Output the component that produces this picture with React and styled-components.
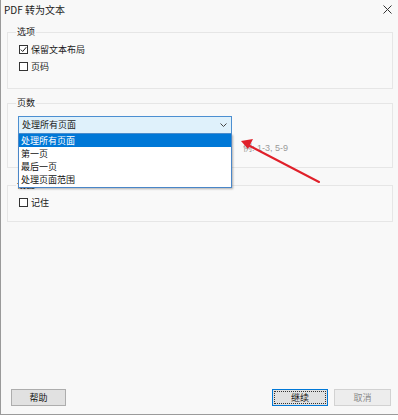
import React from 'react';
import styled, { createGlobalStyle } from 'styled-components';

const GlobalStyle = createGlobalStyle`
  html, body {
    margin: 0;
    padding: 0;
    background: #ffffff;
  }
  body {
    font-family: "Noto Sans CJK SC", "Noto Sans", sans-serif;
    font-size: 9px;
    color: #1a1a1a;
  }
`;

// Dialog window
const Window = styled.div`
  position: relative;
  width: 397px;
  height: 414px;
  background: #f8f8f8;
  border-left: 1px solid #9a9a9a;
  border-bottom: 1px solid #9a9a9a;
  display: flex;
  flex-direction: column;
`;

const TitleBar = styled.div`
  height: 20px;
  display: flex;
  align-items: center;
  justify-content: space-between;
  padding: 0 6px 0 3px;
  font-size: 10px;
  line-height: 12px;
  color: #222;
`;

const CloseButton = styled.div`
  width: 9px;
  height: 9px;
  margin-top: -2px;
  display: flex;
`;

const Content = styled.div`
  flex: 1;
  display: flex;
  flex-direction: column;
  padding: 0 5px 0 6px;
`;

// Group box (like a fieldset)
const GroupBox = styled.div`
  position: relative;
  margin-top: ${p => p.$top}px;
  border: 1px solid #e6e6e6;
  padding: ${p => p.$pt}px 10px ${p => p.$pb}px 11px;
  background: #f9f9f9;
`;

const Caption = styled.div`
  position: absolute;
  top: -7px;
  left: 8px;
  padding: 0 1px;
  font-size: 9px;
  line-height: 12px;
  background: #f8f8f8;
`;

const CheckRow = styled.label`
  height: 17px;
  display: flex;
  align-items: center;
  gap: 3px;
  line-height: 12px;
`;

const Box = styled.span`
  width: 9px;
  height: 9px;
  box-sizing: border-box;
  border: 1px solid #333;
  background: #fff;
  display: flex;
  align-items: center;
  justify-content: center;
`;

const SelectWrap = styled.div`
  position: relative;
  margin-left: -1px;
  width: 214px;
`;

const Select = styled.div`
  width: 214px;
  height: 18px;
  box-sizing: border-box;
  border: 1px solid #4c8fd1;
  background: #dff1fb;
  display: flex;
  align-items: center;
  justify-content: space-between;
  padding: 0 4px 0 3px;
  line-height: 12px;
`;

const HintRow = styled.div`
  margin-top: 8px;
  padding-left: 224px;
  height: 12px;
  display: flex;
  align-items: center;
`;

const Hint = styled.span`
  font-family: "Liberation Sans", "Noto Sans CJK SC", sans-serif;
  font-size: 9px;
  line-height: 12px;
  color: #9a9a9a;
`;

const DropList = styled.ul`
  position: absolute;
  top: 100%;
  left: 0;
  width: 214px;
  box-sizing: border-box;
  margin: 0;
  padding: 0 0 1px;
  list-style: none;
  background: #fff;
  border: 1px solid #4a86c8;
  border-top: none;
  box-shadow: 1px 1px 2px rgba(0, 0, 0, 0.3);
  z-index: 2;
`;

const Option = styled.li`
  height: 13px;
  line-height: 13px;
  padding-left: 2px;
  background: ${p => (p.$active ? '#0078d7' : 'transparent')};
  color: ${p => (p.$active ? '#fff' : '#111')};
`;

const Footer = styled.div`
  margin-top: auto;
  display: flex;
  align-items: center;
  padding: 0 7px 8px 10px;
  gap: 6px;
`;

const Button = styled.button`
  width: ${p => p.$w}px;
  height: 17px;
  margin: 0;
  padding: 0;
  font-family: "Noto Sans CJK SC", sans-serif;
  font-size: 9px;
  line-height: 12px;
  color: ${p => (p.$faded ? '#8a8a8a' : '#111')};
  background: ${p => (p.$faded ? '#ededed' : '#e1e1e1')};
  border: 1px solid ${p => (p.$primary ? '#0078d7' : p.$faded ? '#d2d2d2' : '#adadad')};
  outline: ${p => (p.$primary ? '1px dotted #333' : 'none')};
  outline-offset: -3px;
  &:first-child {
    margin-right: auto;
  }
`;

const Annotation = styled.svg`
  position: absolute;
  left: 236px;
  top: 134px;
  z-index: 3;
`;

const Check = () => (
  <svg width="7" height="7" viewBox="0 0 7 7">
    <path d="M0.8 3.6 L2.7 5.5 L6.3 1.2" fill="none" stroke="#222" strokeWidth="1" />
  </svg>
);

const Checkbox = ({ checked, children }) => (
  <CheckRow>
    <Box>{checked && <Check />}</Box>
    {children}
  </CheckRow>
);

const App = () => {
  return (
    <>
      <GlobalStyle />
      <Window>
        <TitleBar>
          <span>PDF 转为文本</span>
          <CloseButton>
            <svg width="9" height="9" viewBox="0 0 9 9">
              <path d="M0.5 0.5 L8.5 8.5 M8.5 0.5 L0.5 8.5" stroke="#333" strokeWidth="1" />
            </svg>
          </CloseButton>
        </TitleBar>

        <Content>
          <GroupBox $top={12} $pt={8} $pb={13}>
            <Caption>选项</Caption>
            <Checkbox checked>保留文本布局</Checkbox>
            <Checkbox>页码</Checkbox>
          </GroupBox>

          <GroupBox $top={14} $pt={12} $pb={13}>
            <Caption>页数</Caption>
            <SelectWrap>
              <Select>
                <span>处理所有页面</span>
                <svg width="7" height="4" viewBox="0 0 7 4">
                  <path d="M0.5 0.5 L3.5 3.5 L6.5 0.5" fill="none" stroke="#444" strokeWidth="1" />
                </svg>
              </Select>
              <DropList>
                <Option $active>处理所有页面</Option>
                <Option>第一页</Option>
                <Option>最后一页</Option>
                <Option>处理页面范围</Option>
              </DropList>
            </SelectWrap>
            <HintRow>
              <Hint>例: 1-3, 5-9</Hint>
            </HintRow>
          </GroupBox>

          <GroupBox $top={17} $pt={8} $pb={10}>
            <Caption>设置</Caption>
            <Checkbox>记住</Checkbox>
          </GroupBox>
        </Content>

        <Footer>
          <Button $w={55}>帮助</Button>
          <Button $w={56} $primary>继续</Button>
          <Button $w={57} $faded>取消</Button>
        </Footer>

        <Annotation width="86" height="52" viewBox="0 0 86 52">
          <line x1="11" y1="11" x2="82" y2="48" stroke="#e0202a" strokeWidth="2" strokeLinecap="round" />
          <polygon points="4,7 16,5 11,15" fill="#e0202a" />
        </Annotation>
      </Window>
    </>
  );
};

export default App;
